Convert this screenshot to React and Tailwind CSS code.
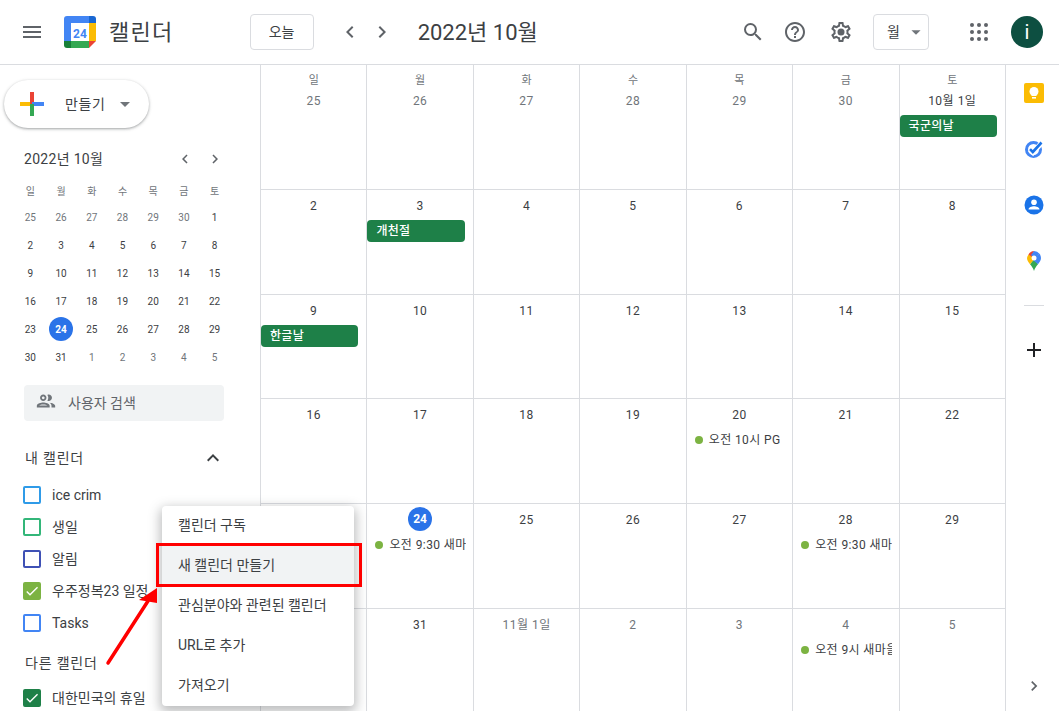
import React from 'react';
import { MdMenu, MdSearch, MdHelpOutline, MdChevronLeft, MdChevronRight, MdExpandLess, MdAdd, MdOutlinePeople, MdCheck, MdArrowDropDown } from 'react-icons/md';

const weekdays = ['일', '월', '화', '수', '목', '금', '토'];

const miniDays = [
  [25, 26, 27, 28, 29, 30, 1],
  [2, 3, 4, 5, 6, 7, 8],
  [9, 10, 11, 12, 13, 14, 15],
  [16, 17, 18, 19, 20, 21, 22],
  [23, 24, 25, 26, 27, 28, 29],
  [30, 31, 1, 2, 3, 4, 5],
];

const cells = [
  { d: '25', muted: true, wd: '일' }, { d: '26', muted: true, wd: '월' }, { d: '27', muted: true, wd: '화' }, { d: '28', muted: true, wd: '수' }, { d: '29', muted: true, wd: '목' }, { d: '30', muted: true, wd: '금' }, { d: '10월 1일', wd: '토', pill: '국군의날' },
  { d: '2' }, { d: '3', pill: '개천절' }, { d: '4' }, { d: '5' }, { d: '6' }, { d: '7' }, { d: '8' },
  { d: '9', pill: '한글날' }, { d: '10' }, { d: '11' }, { d: '12' }, { d: '13' }, { d: '14' }, { d: '15' },
  { d: '16' }, { d: '17' }, { d: '18' }, { d: '19' }, { d: '20', event: '오전 10시 PG' }, { d: '21' }, { d: '22' },
  { d: '23' }, { d: '24', today: true, event: '오전 9:30 새마을 회의' }, { d: '25' }, { d: '26' }, { d: '27' }, { d: '28', event: '오전 9:30 새마을 회의' }, { d: '29' },
  { d: '30' }, { d: '31' }, { d: '11월 1일', muted: true }, { d: '2', muted: true }, { d: '3', muted: true }, { d: '4', muted: true, event: '오전 9시 새마을 회의' }, { d: '5', muted: true },
];

const myCalendars = [
  { name: 'ice crim', color: 'border-[#2f9be8]' },
  { name: '생일', color: 'border-[#33b679]' },
  { name: '알림', color: 'border-[#3f51b5]' },
  { name: '우주정복23 일정', color: 'border-[#7cb342]', fill: 'bg-[#7cb342]' },
  { name: 'Tasks', color: 'border-[#4285f4]' },
];

const menuItems = ['캘린더 구독', '새 캘린더 만들기', '관심분야와 관련된 캘린더', 'URL로 추가', '가져오기'];

const CalendarLogo = () => (
  <svg width="32" height="32" viewBox="0 0 32 32">
    <path d="M3 0h22v7H7v18H0V3a3 3 0 0 1 3-3z" fill="#4285f4" />
    <path d="M25 0h4a3 3 0 0 1 3 3v4h-7z" fill="#1967d2" />
    <rect x="25" y="7" width="7" height="18" fill="#fbbc04" />
    <rect x="7" y="25" width="18" height="7" fill="#34a853" />
    <path d="M0 25h7v7H3a3 3 0 0 1-3-3z" fill="#188038" />
    <path d="M25 25h7l-7 7z" fill="#ea4335" />
    <rect x="7" y="7" width="18" height="18" fill="#fff" />
    <text x="16" y="21.5" textAnchor="middle" fontSize="12" fontWeight="700" fill="#4285f4" fontFamily="Roboto, sans-serif">24</text>
  </svg>
);

const GooglePlus = () => (
  <svg width="24" height="24" viewBox="0 0 24 24">
    <rect x="0" y="10" width="12" height="4" fill="#fbbc04" />
    <rect x="10" y="0" width="4" height="12" fill="#ea4335" />
    <rect x="12" y="10" width="12" height="4" fill="#4285f4" />
    <rect x="10" y="12" width="4" height="12" fill="#34a853" />
  </svg>
);

const AppsDots = () => (
  <svg width="18" height="18" viewBox="0 0 18 18" fill="#5f6368">
    {[2, 9, 16].map(y => [2, 9, 16].map(x => <circle key={`${x}-${y}`} cx={x} cy={y} r="2" />))}
  </svg>
);

const GearIcon = () => (
  <svg className="ml-[22px]" width="24" height="24" viewBox="0 0 24 24" fill="#5f6368">
    <path d="M19.43 12.98c.04-.32.07-.64.07-.98 0-.34-.03-.66-.07-.98l2.11-1.65c.19-.15.24-.42.12-.64l-2-3.46c-.09-.16-.26-.25-.44-.25-.06 0-.12.01-.17.03l-2.49 1c-.52-.4-1.08-.73-1.69-.98l-.38-2.65C14.46 2.18 14.25 2 14 2h-4c-.25 0-.46.18-.49.42l-.38 2.65c-.61.25-1.17.59-1.69.98l-2.49-1c-.06-.02-.12-.03-.18-.03-.17 0-.34.09-.43.25l-2 3.46c-.13.22-.07.49.12.64l2.11 1.65c-.04.32-.07.65-.07.98 0 .33.03.66.07.98l-2.11 1.65c-.19.15-.24.42-.12.64l2 3.46c.09.16.26.25.44.25.06 0 .12-.01.17-.03l2.49-1c.52.4 1.08.73 1.69.98l.38 2.65c.03.24.24.42.49.42h4c.25 0 .46-.18.49-.42l.38-2.65c.61-.25 1.17-.59 1.69-.98l2.49 1c.06.02.12.03.18.03.17 0 .34-.09.43-.25l2-3.46c.12-.22.07-.49-.12-.64l-2.11-1.65zm-1.98-1.71c.04.31.05.52.05.73 0 .21-.02.43-.05.73l-.14 1.13.89.7 1.08.84-.7 1.21-1.27-.51-1.04-.42-.9.68c-.43.32-.84.56-1.25.73l-1.06.43-.16 1.13-.2 1.35h-1.4l-.19-1.35-.16-1.13-1.06-.43c-.43-.18-.83-.41-1.23-.71l-.91-.7-1.06.43-1.27.51-.7-1.21 1.08-.84.89-.7-.14-1.13c-.03-.31-.05-.54-.05-.74s.02-.43.05-.73l.14-1.13-.89-.7-1.08-.84.7-1.21 1.27.51 1.04.42.9-.68c.43-.32.84-.56 1.25-.73l1.06-.43.16-1.13.2-1.35h1.39l.19 1.35.16 1.13 1.06.43c.43.18.83.41 1.23.71l.91.7 1.06-.43 1.27-.51.7 1.21-1.07.85-.89.7.14 1.13z" />
    <circle cx="12" cy="12" r="3.500" />
  </svg>
);

const KeepIcon = () => (
  <svg width="20" height="20" viewBox="0 0 20 20">
    <rect width="20" height="20" rx="2" fill="#fbbc04" />
    <circle cx="10" cy="8.5" r="4.5" fill="#fff" />
    <rect x="7.5" y="11" width="5" height="2" fill="#fff" />
    <rect x="8" y="14" width="4" height="1.6" fill="#fff" />
  </svg>
);

const TasksIcon = () => (
  <svg width="20" height="20" viewBox="0 0 20 20" fill="none">
    <circle cx="9.5" cy="10.5" r="7" stroke="#4285f4" strokeWidth="3" />
    <path d="M6 10.5l3 3 9-10" stroke="#fff" strokeWidth="5" />
    <path d="M6 10.2l2.8 2.8L17.5 3.5" stroke="#1a73e8" strokeWidth="2.6" />
  </svg>
);

const ContactsIcon = () => (
  <svg width="20" height="20" viewBox="0 0 20 20">
    <circle cx="10" cy="10" r="9.5" fill="#1a73e8" />
    <circle cx="10" cy="7.2" r="2.8" fill="#fff" />
    <path d="M4.500 14.500c0-2.200 3.400-3.300 5.500-3.300s5.500 1.100 5.500 3.300z" fill="#fff" />
  </svg>
);

const MapsIcon = () => (
  <svg width="14" height="20" viewBox="0 0 14 20">
    <path d="M7 20c-.8-3-2.200-4.500-4-6.800L7 8z" fill="#34a853" />
    <path d="M7 20c.8-3 2.200-4.500 4-6.800L7 8z" fill="#34a853" />
    <path d="M1.500 3.500A7 7 0 0 0 0 7c0 2.500 1.500 4.200 3 6.200L9 6z" fill="#fbbc04" />
    <path d="M1.500 3.500A7 7 0 0 1 7 0l-2 6z" fill="#ea4335" />
    <path d="M7 0a7 7 0 0 1 5.500 2.700L8 8 4 4z" fill="#4285f4" />
    <path d="M12.500 2.700A7 7 0 0 1 14 7c0 2.500-1.500 4.200-3 6.200L6 9z" fill="#4285f4" />
    <circle cx="7" cy="7" r="2.500" fill="#fff" />
  </svg>
);

const Checkbox = ({ color, fill, name }) => (
  <div className="flex items-center h-8">
    <div className={`w-[18px] h-[18px] rounded-[2px] border-2 flex items-center justify-center ${color} ${fill || ''}`}>
      {fill && <MdCheck className="text-white shrink-0" size={16} />}
    </div>
    <span className="ml-[11px] text-[14px] text-[#3c4043] whitespace-nowrap">{name}</span>
  </div>
);

const DayCell = ({ cell }) => (
  <div className="border-l border-b border-[#dadce0] flex flex-col pt-1.5 min-w-0 overflow-hidden">
    {cell.wd && <div className="h-5 text-center text-[11px] leading-5 text-[#70757a]">{cell.wd}</div>}
    <div className="h-5 flex justify-center items-center">
      {cell.today ? (
        <div className="w-6 h-6 mt-[-2px] rounded-full bg-[#2a73e8] text-white flex items-center justify-center text-[12px] font-bold">{cell.d}</div>
      ) : (
        <span className={`text-[12px] tracking-[0.5px] ${cell.muted ? 'text-[#70757a]' : 'text-[#3c4043]'}`}>{cell.d}</span>
      )}
    </div>
    {cell.pill && (
      <div className="mt-1 mr-2 h-[22px] rounded-[4px] bg-[#1e8048] text-white text-[12px] font-medium leading-[22px] pl-[9px] tracking-[0.3px]">{cell.pill}</div>
    )}
    {cell.event && (
      <div className="mt-[5px] ml-2 mr-[7px] flex items-center h-5 overflow-hidden">
        <span className="w-2 h-2 rounded-full bg-[#7cb342] shrink-0" />
        <span className="ml-1.5 text-[12px] tracking-[0.4px] text-[#3c4043] whitespace-nowrap">{cell.event}</span>
      </div>
    )}
  </div>
);

export default function App() {
  return (
    <div className="relative w-[1059px] h-[711px] overflow-hidden bg-white flex flex-col font-['Roboto','Noto_Sans_CJK_KR',sans-serif]">
      <header className="h-[65px] shrink-0 border-b border-[#dadce0] flex items-center">
        <MdMenu className="ml-5 text-[#5f6368]" size={24} />
        <div className="ml-5"><CalendarLogo /></div>
        <span className="ml-[13px] text-[22px] tracking-[1.3px] text-[#3c4043]">캘린더</span>
        <button className="ml-[76px] w-16 h-9 border border-[#dadce0] rounded text-[14px] text-[#3c4043]">오늘</button>
        <MdChevronLeft className="ml-6 text-[#5f6368]" size={24} />
        <MdChevronRight className="ml-2 text-[#5f6368]" size={24} />
        <span className="ml-6 text-[22px] text-[#3c4043] whitespace-nowrap">2022년 10월</span>
        <div className="ml-auto flex items-center">
          <MdSearch className="text-[#5f6368]" size={24} />
          <MdHelpOutline className="ml-[18px] text-[#5f6368]" size={24} />
          <GearIcon />
          <div className="ml-5 w-14 h-9 border border-[#dadce0] rounded flex items-center pl-[13px] text-[14px] text-[#3c4043]">
            월
            <MdArrowDropDown className="ml-[5px] text-[#70757a] shrink-0" size={22} />
          </div>
          <div className="ml-[41px]"><AppsDots /></div>
          <div className="ml-[23px] mr-4 w-8 h-8 rounded-full bg-[#0d4f41] text-white flex items-center justify-center text-[20px]">i</div>
        </div>
      </header>

      <div className="flex flex-1 min-h-0">
        <aside className="w-[260px] shrink-0 overflow-hidden">
          <div className="ml-1 mt-[15px] w-[145px] h-12 rounded-full bg-white shadow-[0_1px_2px_0_rgba(60,64,67,0.3),0_1px_3px_1px_rgba(60,64,67,0.15)] flex items-center pl-4">
            <GooglePlus />
            <span className="ml-[21px] text-[14px] tracking-[0.6px] text-[#3c4043]">만들기</span>
            <MdArrowDropDown className="ml-[8px] text-[#70757a]" size={24} />
          </div>

          <div className="ml-6 mt-[19px] h-6 w-[200px] flex items-center">
            <span className="text-[14px] tracking-[0.3px] text-[#3c4043]">2022년 10월</span>
            <MdChevronLeft className="ml-auto text-[#5f6368]" size={18} />
            <MdChevronRight className="ml-3 text-[#5f6368]" size={18} />
          </div>

          <div className="ml-[15px] mt-2 w-[215px] grid grid-cols-7 grid-rows-[24px_repeat(6,28px)]">
            {weekdays.map(w => (
              <div key={w} className="flex items-center justify-center text-[10px] text-[#70757a]">{w}</div>
            ))}
            {miniDays.map((row, i) => row.map((d, j) => {
              const muted = (i === 0 && d > 1) || (i === 5 && d < 10);
              const today = i === 4 && d === 24;
              return (
                <div key={`${i}-${j}`} className="flex items-center justify-center">
                  {today ? (
                    <span className="w-6 h-6 rounded-full bg-[#2a73e8] text-white text-[10px] font-bold flex items-center justify-center">{d}</span>
                  ) : (
                    <span className={`text-[10px] ${muted ? 'text-[#70757a]' : 'text-[#3c4043]'}`}>{d}</span>
                  )}
                </div>
              );
            }))}
          </div>

          <div className="ml-6 mt-3.5 w-[200px] h-9 rounded bg-[#f1f3f4] flex items-center pl-[11px]">
            <MdOutlinePeople className="text-[#70757a] mt-[-5px]" size={22} />
            <span className="ml-[11px] text-[14px] text-[#5f6368]">사용자 검색</span>
          </div>

          <div className="ml-[25px] mt-[25px] w-[200px] h-6 flex items-center justify-between">
            <span className="text-[14px] tracking-[0.8px] text-[#3c4043]">내 캘린더</span>
            <MdExpandLess className="text-[#3c4043]" size={24} />
          </div>

          <div className="ml-[23px] mt-[9px]">
            {myCalendars.map(c => <Checkbox key={c.name} {...c} />)}
          </div>

          <div className="ml-[25px] mt-3 h-6 flex items-center">
            <span className="text-[14px] tracking-[0.8px] text-[#3c4043]">다른 캘린더</span>
          </div>
          <div className="ml-[23px] mt-[7px]">
            <Checkbox name="대한민국의 휴일" color="border-[#1e8048]" fill="bg-[#1e8048]" />
          </div>
        </aside>

        <main className="flex-1 min-w-0 overflow-hidden grid grid-cols-7 grid-rows-[125px_105px_104px_105px_105px_110px]">
          {cells.map((c, i) => <DayCell key={i} cell={c} />)}
        </main>

        <aside className="w-[54px] shrink-0 border-l border-[#dadce0] flex flex-col items-center pl-[3px]">
          <div className="mt-[18px] h-5 flex items-center"><KeepIcon /></div>
          <div className="mt-9 h-5 flex items-center"><TasksIcon /></div>
          <div className="mt-9 h-5 flex items-center"><ContactsIcon /></div>
          <div className="mt-9 h-5 flex items-center"><MapsIcon /></div>
          <div className="mt-[34px] w-5 h-px bg-[#dadce0]" />
          <MdAdd className="mt-[32px] text-[#202124]" size={24} />
          <MdChevronRight className="mt-auto mb-[15px] text-[#5f6368]" size={20} />
        </aside>
      </div>

      {/* dropdown menu */}
      <div className="absolute left-[162px] top-[506px] w-[192px] bg-white rounded shadow-[0_4px_12px_2px_rgba(60,64,67,0.35)] z-10">
        {menuItems.map((m, i) => (
          <div key={m} className={`h-10 flex items-center pl-4 pb-0.5 text-[14px] text-[#3c4043] whitespace-nowrap ${i === 1 ? 'bg-[#f1f3f4]' : ''}`}>{m}</div>
        ))}
      </div>

      {/* annotation drawn over the screenshot */}
      <div className="absolute left-[156px] top-[543px] w-[206px] h-[44px] border-[3px] border-[#ff0000] z-20" />
      <svg className="absolute left-[100px] top-[580px] z-20" width="64" height="90" viewBox="0 0 64 90">
        <line x1="8" y1="83" x2="48" y2="21" stroke="#ff0000" strokeWidth="3.5" strokeLinecap="round" />
        <polygon points="57,8 57,23 39,20" fill="#ff0000" />
      </svg>
    </div>
  );
}
